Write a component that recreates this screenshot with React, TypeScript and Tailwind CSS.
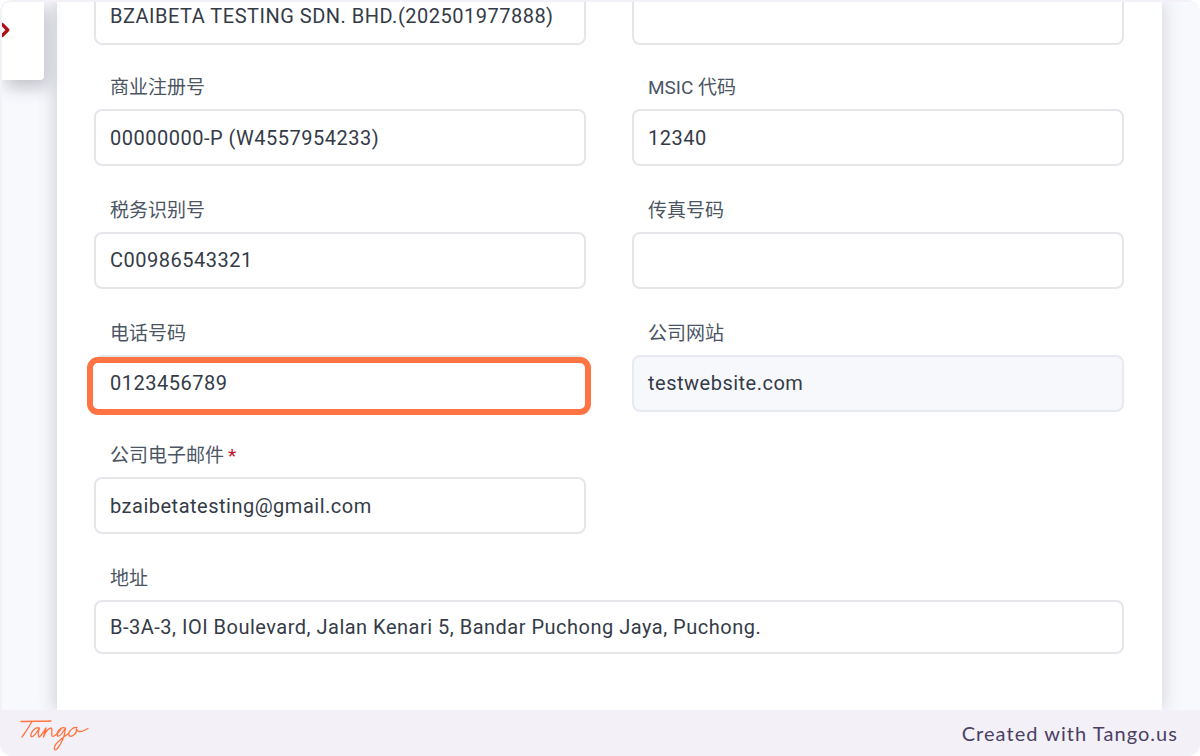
import { ChevronRight } from "lucide-react";

const cjk = "font-['Roboto','Noto_Sans_CJK_SC',sans-serif]";

type FieldProps = {
  label?: string;
  value?: string;
  required?: boolean;
  disabled?: boolean;
  short?: boolean;
  highlight?: boolean;
};

function Field({ label, value, required, disabled, short, highlight }: FieldProps) {
  return (
    <div className="relative flex flex-col">
      {label && (
        <label className="mb-[10px] h-[22px] pl-4 text-[19px] leading-[22px] text-[#4b5563]">
          {label}
          {required && <span className="ml-1 text-[#c1121f]">*</span>}
        </label>
      )}
      <div
        className={`flex items-center rounded-lg border-2 px-[14px] text-[20px] tracking-[0.5px] text-[#343b47] ${
          short ? "h-[54px]" : "h-[57px]"
        } ${disabled ? "border-[#e8eaf2] bg-[#f7f8fc]" : "border-[#e5e6ea] bg-white"} ${
          highlight ? "border-x-transparent border-b-transparent" : ""
        }`}
      >
        {value}
      </div>
      {highlight && (
        <div className="absolute bottom-[-3px] left-[-7px] right-[-5px] h-[58px] rounded-[11px] border-[6px] border-[#ff7442]" />
      )}
    </div>
  );
}

export default function App() {
  return (
    <div className="flex h-[756px] w-[1200px] flex-col overflow-hidden rounded-xl bg-[#f3f1f7]">
      <div className={`relative ml-[2px] mt-[2px] flex min-h-0 flex-1 justify-center overflow-hidden rounded-tl-lg bg-[#f8f9fd] pl-[55px] pr-[38px] ${cjk}`}>
        {/* side tab */}
        <div className="absolute left-0 top-0 flex h-[78px] w-[42px] items-start rounded-br bg-white pt-[17px] shadow-[4px_8px_16px_rgba(60,64,80,0.28)]">
          <ChevronRight size={22} strokeWidth={3.5} className="-ml-[8px] text-[#b00d14]" />
        </div>

        {/* card */}
        <div className="h-full w-full bg-white pl-[37px] pr-[38px] shadow-[-6px_0_14px_rgba(60,64,80,0.14),6px_0_14px_rgba(60,64,80,0.1)]">
          <div className="-mt-[14.5px] grid grid-cols-2 gap-x-[46px] gap-y-[33.7px]">
            <div className="-mb-px">
              <Field value="BZAIBETA TESTING SDN. BHD.(202501977888)" />
            </div>
            <div className="-mb-px">
              <Field />
            </div>
            <Field label="商业注册号" value="00000000-P (W4557954233)" />
            <Field label="MSIC 代码" value="12340" />
            <Field label="税务识别号" value="C00986543321" />
            <Field label="传真号码" />
            <Field label="电话号码" value="0123456789" highlight />
            <Field label="公司网站" value="testwebsite.com" disabled />
            <Field label="公司电子邮件" value="bzaibetatesting@gmail.com" required />
            <div />
            <div className="col-span-2">
              <Field label="地址" value="B-3A-3, IOI Boulevard, Jalan Kenari 5, Bandar Puchong Jaya, Puchong." short />
            </div>
          </div>
        </div>
      </div>

      {/* tango footer */}
      <div className="flex h-[46px] shrink-0 items-center justify-between pl-[20px] pr-[22px]">
        <svg className="mt-[4px]" width="70" height="34" viewBox="0 0 70 34" fill="none" stroke="#ff7442" strokeWidth="1.3" strokeLinecap="round" strokeLinejoin="round">
          <path d="M1 3.5 C11 3 21 3.5 31 3" />
          <path d="M12 3.5 C9 9 5 15 2 19" />
          <path d="M19 10 C15 8.5 10 15 11 18.5 C13 20 17 14 19.5 10 C18.5 13 17.5 17 19 19 C21 18.5 24 13 26 10 C25.5 12.5 24 16 23.5 19 C25 15 28 10.5 31 10 C33 10.5 31 15 32 18 C34 19.5 38 15 41 11" />
          <path d="M45 10 C41 8.5 36 14 37.5 18 C40 19.5 43 14 45.5 10 C45 16 42 25 37 31 C34 33.5 33 30 36 26 C39 22.5 44 19 49 15" />
          <path d="M57 9.5 C53 9 48 13 49 17.5 C51.5 20 57 16 56.5 11 C57 13.5 60 14 63 13 L68 10.5" />
        </svg>
        <span className="-mt-px font-['Lato',sans-serif] text-[20px] tracking-[1.05px] text-[#4a3f63]">Created with Tango.us</span>
      </div>
    </div>
  );
}
